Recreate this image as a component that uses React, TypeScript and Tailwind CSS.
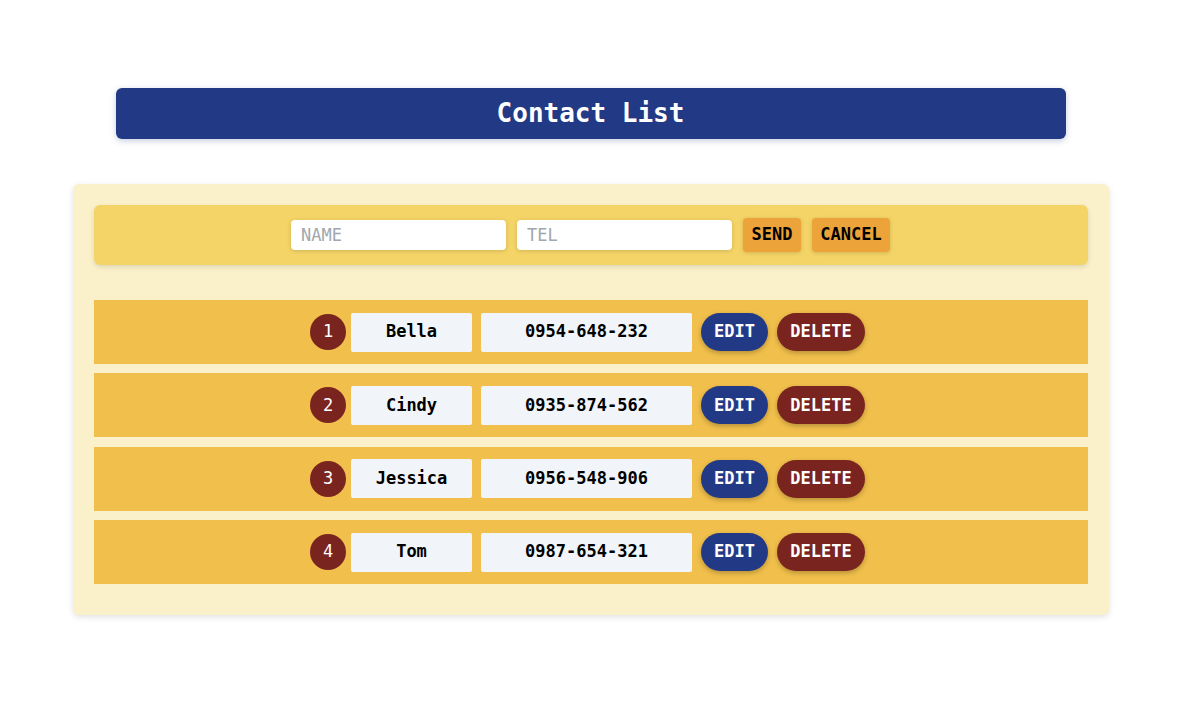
import React, { useState } from 'react';

type Contact = { name: string; tel: string };

export default function App() {
  const [contacts] = useState<Contact[]>([
    { name: "Bella", tel: "0954-648-232" },
    { name: "Cindy", tel: "0935-874-562" },
    { name: "Jessica", tel: "0956-548-906" },
    { name: "Tom", tel: "0987-654-321" },
  ]);

  return (
    <div className="min-h-[708px] w-full bg-white pt-[88px] font-['DejaVu_Sans_Mono',monospace]">
      {/* Header */}
      <div className="mx-auto flex h-[51px] w-[950px] items-center justify-center rounded-md bg-[#223a86] shadow-[0_2px_6px_rgba(34,58,134,0.25)]">
        <h1 className="text-[26px] font-bold text-white">Contact List</h1>
      </div>

      {/* Panel */}
      <div className="mx-auto mt-[45px] w-[1036px] rounded-md bg-[#faf1cb] px-[21px] pt-[21px] pb-[31px] shadow-[0_2px_6px_rgba(0,0,0,0.12)]">
        {/* Form */}
        <div className="flex h-[60px] items-center justify-center gap-[11px] rounded-md bg-[#f4d466] shadow-[0_2px_5px_rgba(0,0,0,0.12)]">
          <input
            placeholder="NAME"
            className="h-[30px] w-[215px] rounded-[4px] bg-white px-[10px] text-[17px] text-black shadow-[0_1px_4px_rgba(0,0,0,0.15)] outline-none placeholder:text-[#a2a6ad]"
          />
          <input
            placeholder="TEL"
            className="h-[30px] w-[215px] rounded-[4px] bg-white px-[10px] text-[17px] text-black shadow-[0_1px_4px_rgba(0,0,0,0.15)] outline-none placeholder:text-[#a2a6ad]"
          />
          <button className="h-[34px] w-[58px] rounded-[4px] bg-[#eca33a] text-[17px] font-bold text-black shadow-[0_1px_4px_rgba(0,0,0,0.15)]">
            SEND
          </button>
          <button className="h-[34px] w-[78px] rounded-[4px] bg-[#eca33a] text-[17px] font-bold text-black shadow-[0_1px_4px_rgba(0,0,0,0.15)]">
            CANCEL
          </button>
        </div>

        {/* List */}
        <ul className="mt-[35px] flex flex-col gap-[9.4px]">
          {contacts.map((c, i) => (
            <li key={i} className="flex h-[64px] items-center justify-center gap-[9px] bg-[#f1bf4b] pr-[6px]">
              <div className="flex items-center gap-[5px]">
                <span className="flex h-[36px] w-[36px] items-center justify-center rounded-full bg-[#7a2420] text-[17px] text-white">
                  {i + 1}
                </span>
                <span className="flex h-[39px] w-[121px] items-center justify-center rounded-[2px] bg-[#f1f5fa] text-[17px] font-bold text-black">
                  {c.name}
                </span>
              </div>
              <span className="flex h-[39px] w-[211px] items-center justify-center rounded-[2px] bg-[#f1f5fa] text-[17px] font-bold text-black">
                {c.tel}
              </span>
              <button className="h-[38px] w-[67px] rounded-full bg-[#223a86] text-[17px] font-bold text-white shadow-[0_2px_5px_rgba(0,0,0,0.25)]">
                EDIT
              </button>
              <button className="h-[38px] w-[88px] rounded-full bg-[#7a2420] text-[17px] font-bold text-white shadow-[0_2px_5px_rgba(0,0,0,0.25)]">
                DELETE
              </button>
            </li>
          ))}
        </ul>
      </div>
    </div>
  );
}
